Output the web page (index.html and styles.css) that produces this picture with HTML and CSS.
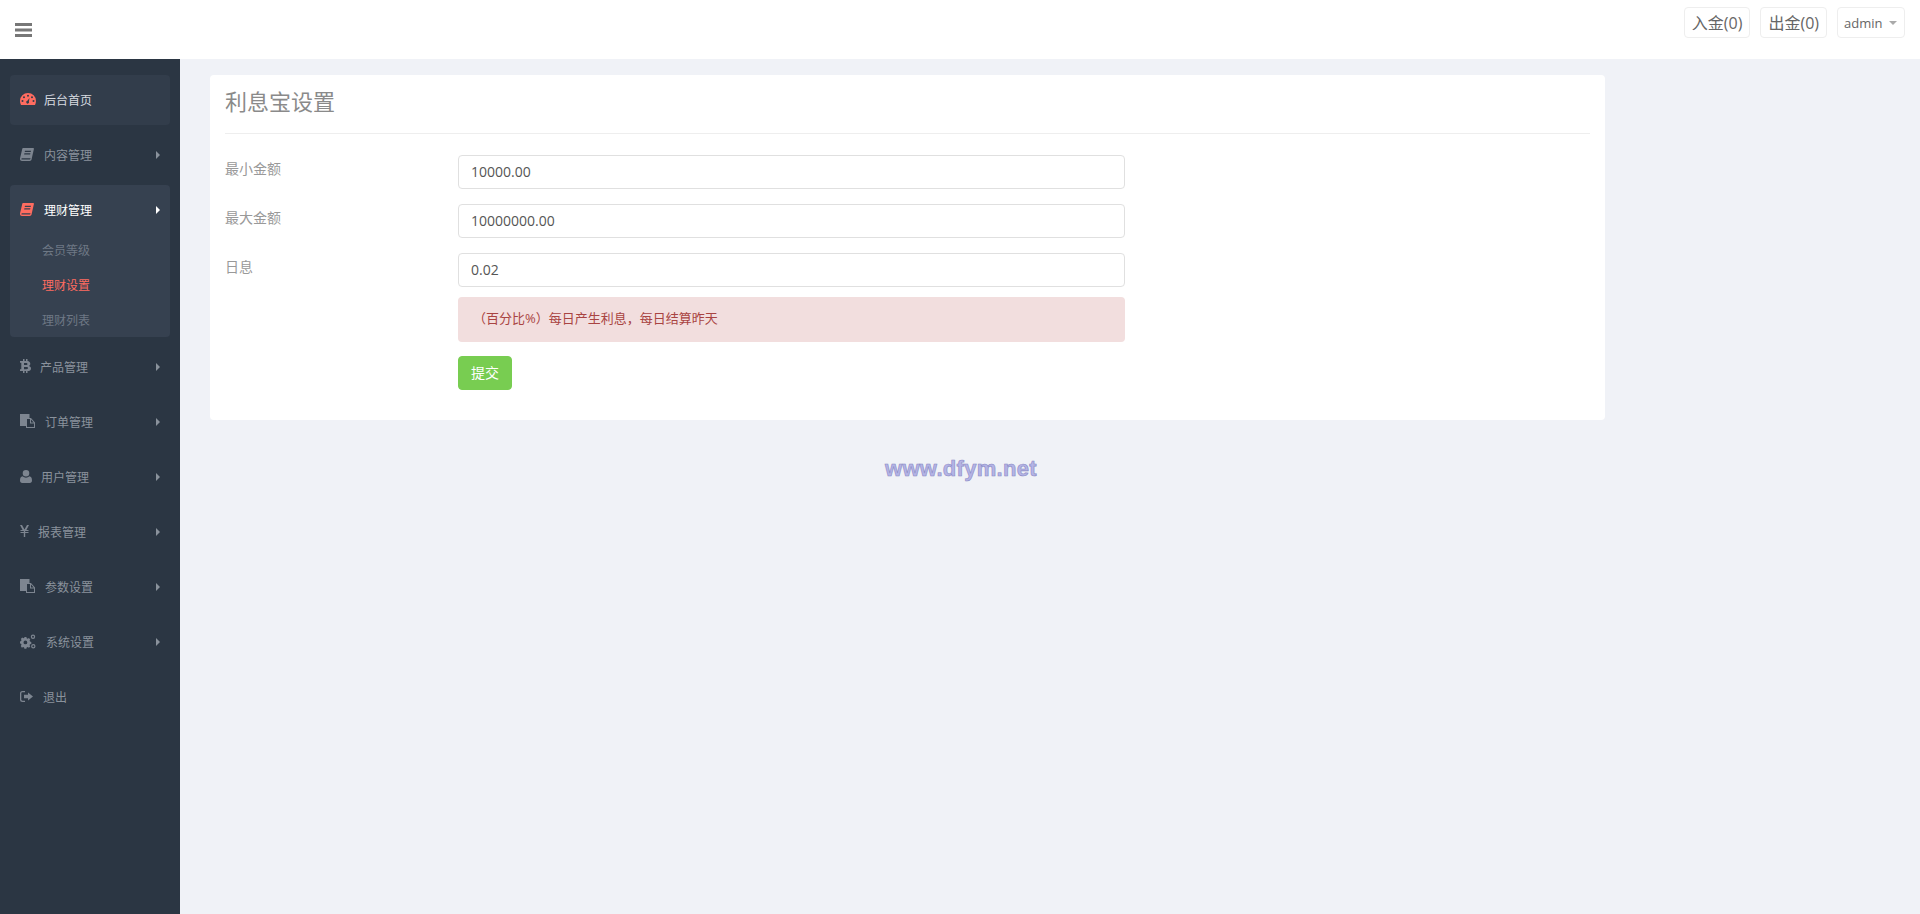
FILE: index.html
```html
<!DOCTYPE html>
<html lang="zh-CN">
<head>
<meta charset="utf-8">
<title>利息宝设置</title>
<link rel="stylesheet" href="styles.css">
</head>
<body>
<header class="topbar">
  <svg class="menu-toggle" viewBox="0 0 17 14"><path d="M0 0h17v3H0zM0 5.500h17v3H0zM0 11h17v3H0z"/></svg>
  <div class="top-actions">
    <a class="top-btn">入金(0)</a>
    <a class="top-btn">出金(0)</a>
    <a class="top-btn user-btn">admin<i class="caret"></i></a>
  </div>
</header>
<div class="shell">
  <aside class="sidebar">
    <nav class="nav">
      <div class="nav-group nav-home">
        <a class="nav-item">
          <svg class="ico ico-dash" viewBox="0 0 16 12"><path fill-rule="evenodd" d="M8 0a8 8 0 0 1 8 8c0 1.500-.4 2.800-1 4H1c-.6-1.200-1-2.500-1-4a8 8 0 0 1 8-8zM8 1.700a1 1 0 1 0 0 2 1 1 0 0 0 0-2zM4 3.200a1 1 0 1 0 0 2 1 1 0 0 0 0-2zM12 3.200a1 1 0 1 0 0 2 1 1 0 0 0 0-2zM2.500 7a1 1 0 1 0 0 2 1 1 0 0 0 0-2zM13.500 7a1 1 0 1 0 0 2 1 1 0 0 0 0-2zM9.500 5 7.400 7.800a1.400 1.400 0 1 0 1.500.8z"/></svg>
          <span>后台首页</span>
        </a>
      </div>
      <div class="nav-group">
        <a class="nav-item">
          <svg class="ico ico-book" viewBox="0 0 14 13"><path fill-rule="evenodd" d="M3 0h10.200c.6 0 .9.400.7 1l-2.300 10.300c-.2.900-.9 1.700-2 1.700H2c-1.200 0-2-1-2-2 0-.3 0-.6.100-.9L2.300.8C2.400.3 2.600 0 3 0zM5 2.700l-.3 1.200h6l.3-1.200zM4.400 5.300l-.3 1.200h6l.3-1.200zM2 10.300c-.4 0-.6.300-.6.600s.2.600.6.600h7.800c.3 0 .5-.2.600-.5l.1-.7z"/></svg>
          <span>内容管理</span><i class="arrow"></i>
        </a>
      </div>
      <div class="nav-group nav-open">
        <a class="nav-item">
          <svg class="ico ico-book" viewBox="0 0 14 13"><path fill-rule="evenodd" d="M3 0h10.200c.6 0 .9.400.7 1l-2.300 10.300c-.2.900-.9 1.700-2 1.700H2c-1.200 0-2-1-2-2 0-.3 0-.6.100-.9L2.300.8C2.400.3 2.600 0 3 0zM5 2.700l-.3 1.200h6l.3-1.200zM4.400 5.300l-.3 1.200h6l.3-1.200zM2 10.300c-.4 0-.6.300-.6.600s.2.600.6.600h7.800c.3 0 .5-.2.600-.5l.1-.7z"/></svg>
          <span>理财管理</span><i class="arrow"></i>
        </a>
        <div class="subnav">
          <a class="sub-item">会员等级</a>
          <a class="sub-item sub-active">理财设置</a>
          <a class="sub-item">理财列表</a>
        </div>
      </div>
      <div class="nav-group">
        <a class="nav-item">
          <svg class="ico ico-btc" viewBox="0 0 11 14"><path fill-rule="evenodd" d="M3 0h1.500v2H6V0h1.500v2.100C9.300 2.400 10.300 3.300 10.300 4.800c0 1-.5 1.700-1.300 2.100 1.200.4 2 1.200 2 2.500 0 1.800-1.300 2.600-3.500 2.700V14H6v-1.900H4.500V14H3v-1.900H0V10.300h1.300V3.700H0V2h3zM4 3.900v2.200h2c.9 0 1.500-.4 1.500-1.100S6.900 3.900 6 3.900zM4 8v2.200h2.400c1 0 1.700-.4 1.700-1.100C8.100 8.400 7.400 8 6.400 8z"/></svg>
          <span>产品管理</span><i class="arrow"></i>
        </a>
      </div>
      <div class="nav-group">
        <a class="nav-item">
          <svg class="ico ico-files" viewBox="0 0 15 14"><path fill-rule="evenodd" d="M0 0h9.500v4H11l4 4.500V14H6v-2H0zM7 5v8h7V9.500h-4V5zM11 5.500v3h2.700z"/></svg>
          <span>订单管理</span><i class="arrow"></i>
        </a>
      </div>
      <div class="nav-group">
        <a class="nav-item">
          <svg class="ico ico-user" viewBox="0 0 12 13"><path d="M6 0a3.300 3.300 0 1 1 0 6.600A3.300 3.300 0 0 1 6 0zM2.600 6.300C3.500 7.200 4.700 7.700 6 7.700s2.500-.5 3.400-1.400c1.800.2 2.600 1.700 2.600 4.200 0 1.500-.8 2.500-2.200 2.500H2.200C.8 13 0 12 0 10.500c0-2.500.8-4 2.600-4.200z"/></svg>
          <span>用户管理</span><i class="arrow"></i>
        </a>
      </div>
      <div class="nav-group">
        <a class="nav-item">
          <svg class="ico ico-yen" viewBox="0 0 9 12"><path d="M0 0h2l2.500 4.500L7 0h2L6.400 5H8.500v1H5.200v1h3.300v1H5.200v4H3.800V8H.5V7h3.300V6H.5V5h2.100z"/></svg>
          <span>报表管理</span><i class="arrow"></i>
        </a>
      </div>
      <div class="nav-group">
        <a class="nav-item">
          <svg class="ico ico-files" viewBox="0 0 15 14"><path fill-rule="evenodd" d="M0 0h9.500v4H11l4 4.500V14H6v-2H0zM7 5v8h7V9.500h-4V5zM11 5.500v3h2.700z"/></svg>
          <span>参数设置</span><i class="arrow"></i>
        </a>
      </div>
      <div class="nav-group">
        <a class="nav-item">
          <svg class="ico ico-cogs" viewBox="0 0 16 14"><path fill-rule="evenodd" d="M4.400 2.500h2l.3 1.300 1 .4 1.200-.7 1.400 1.400-.7 1.200.4 1 1.300.3v2l-1.300.3-.4 1 .7 1.200-1.400 1.400-1.200-.7-1 .4-.3 1.300h-2l-.3-1.300-1-.4-1.200.7L.8 11.400l.7-1.200-.4-1L0 8.900v-2l1.100-.3.4-1-.7-1.200 1.400-1.400 1.200.7 1-.4zM5.400 6a1.900 1.900 0 1 0 0 3.800 1.900 1.900 0 0 0 0-3.800zM13 0a2.200 2.200 0 1 1 0 4.400A2.200 2.200 0 0 1 13 0zm0 1.200a1 1 0 1 0 0 2 1 1 0 0 0 0-2zM13.300 9.500a2.200 2.200 0 1 1 0 4.400 2.200 2.200 0 0 1 0-4.400zm0 1.200a1 1 0 1 0 0 2 1 1 0 0 0 0-2z"/></svg>
          <span>系统设置</span><i class="arrow"></i>
        </a>
      </div>
      <div class="nav-group">
        <a class="nav-item">
          <svg class="ico ico-out" viewBox="0 0 13 11"><path fill-rule="evenodd" d="M2.500 0H5v1.300H2.500c-.7 0-1.200.5-1.200 1.200v6c0 .7.500 1.200 1.200 1.200H5V11H2.500A2.500 2.500 0 0 1 0 8.500v-6A2.500 2.500 0 0 1 2.500 0zM8 1.500l5 4-5 4V7.200H4V3.800h4z"/></svg>
          <span>退出</span>
        </a>
      </div>
    </nav>
  </aside>
  <main class="content">
    <section class="card">
      <h1 class="card-title">利息宝设置</h1>
      <form class="form">
        <label class="form-label">最小金额</label>
        <input class="form-input" type="text" value="10000.00">
        <label class="form-label">最大金额</label>
        <input class="form-input" type="text" value="10000000.00">
        <label class="form-label">日息</label>
        <div class="field-stack">
          <input class="form-input" type="text" value="0.02">
          <div class="alert">（百分比%）每日产生利息，每日结算昨天</div>
          <button class="submit" type="button">提交</button>
        </div>
      </form>
    </section>
    <div class="watermark">www.dfym.net</div>
  </main>
</div>
</body>
</html>
```
FILE: styles.css
```css
* { box-sizing: border-box; }
html, body { height: 100%; }
body {
  margin: 0;
  overflow: hidden;
  background: #f0f2f7;
  color: #555;
  font-family: "Open Sans", "Noto Sans CJK SC", sans-serif;
  font-size: 14px;
}
.topbar {
  height: 59px;
  background: #fff;
  display: flex;
  justify-content: space-between;
  align-items: flex-start;
  padding: 7px 15px 0;
}
.menu-toggle { width: 17px; height: 14px; margin-top: 16px; fill: #777; }
.top-actions { display: flex; gap: 10px; }
.top-btn {
  height: 31px;
  padding: 0 7px;
  border: 1px solid #eee;
  border-radius: 4px;
  background: #fff;
  color: #666;
  font-size: 16px;
  line-height: 31px;
  white-space: nowrap;
}
.user-btn { width: 68px; padding: 1px 6px 0; font-size: 13px; display: flex; align-items: center; }
.caret {
  margin-left: 7px;
  border-left: 4px solid transparent;
  border-right: 4px solid transparent;
  border-top: 4px solid #aaa;
}
.shell { display: flex; height: calc(100% - 59px); }
.sidebar { width: 180px; flex: none; background: #2b3643; padding: 16px 10px 0; }
.nav { display: flex; flex-direction: column; gap: 5px; }
.nav-group { border-radius: 4px; }
.nav-home { background: #323d4b; }
.nav-home .nav-item { color: #d8dce1; }
.nav-home .ico, .nav-open .nav-item .ico { fill: #ff6c60; }
.nav-open { background: #364150; height: 152px; }
.nav-open .nav-item { color: #fff; }
.nav-open .arrow { border-left-color: #fff; }
.nav-item {
  height: 50px;
  display: flex;
  align-items: center;
  padding: 0 10px;
  color: #8a929c;
  font-size: 12px;
  position: relative;
}
.ico { flex: none; fill: #7d8590; margin-bottom: 2px; }
.ico-dash { width: 16px; height: 12px; margin-right: 8px; }
.ico-book { width: 14px; height: 13px; margin-right: 10px; }
.ico-btc { width: 11px; height: 14px; margin-right: 9px; }
.ico-files { width: 15px; height: 14px; margin-right: 10px; }
.ico-user { width: 12px; height: 13px; margin-right: 9px; }
.ico-yen { width: 9px; height: 12px; margin-right: 9px; }
.ico-cogs { width: 16px; height: 15px; margin-right: 10px; }
.ico-out { width: 13px; height: 11px; margin-right: 10px; }
.arrow {
  position: absolute;
  right: 10px;
  top: 21px;
  border-top: 4px solid transparent;
  border-bottom: 4px solid transparent;
  border-left: 4px solid #8a929c;
}
.subnav { display: flex; flex-direction: column; margin-top: -2px; }
.sub-item {
  height: 35px;
  line-height: 35px;
  padding-left: 32px;
  color: #6e7885;
  font-size: 12px;
}
.sub-active { color: #ff6c60; }
.content { flex: 1; padding: 16px 30px; position: relative; }
.card {
  width: 1395px;
  height: 345px;
  background: #fff;
  border-radius: 4px;
  padding: 0 15px;
}
.card-title {
  margin: 0 0 21px;
  height: 59px;
  border-bottom: 1px solid #eee;
  color: #8a8a8a;
  font-size: 22px;
  font-weight: 400;
  line-height: 53px;
}
.form { display: grid; grid-template-columns: 233px 667px; row-gap: 15px; align-items: start; }
.form-label { padding-top: 4px; line-height: 20px; color: #999; font-size: 14px; }
.form-input {
  display: block;
  width: 100%;
  height: 34px;
  padding: 0 12px 2px;
  border: 1px solid #e0e0e0;
  border-radius: 4px;
  background: #fff;
  color: #555;
  font: 14px "Open Sans", "Noto Sans CJK SC", sans-serif;
}
.field-stack { display: flex; flex-direction: column; align-items: flex-start; }
.alert {
  width: 100%;
  height: 45px;
  margin: 10px 0 14px;
  padding: 0 15px;
  border-radius: 4px;
  background: #f2dede;
  color: #a94442;
  font-size: 13px;
  line-height: 43px;
}
.submit {
  width: 54px;
  height: 34px;
  padding: 0 0 3px;
  border: 1px solid #78cd51;
  border-radius: 4px;
  background: #78cd51;
  color: #fff;
  font: 14px "Open Sans", "Noto Sans CJK SC", sans-serif;
}
.watermark {
  position: absolute;
  left: 705px;
  top: 396px;
  color: #b4b4e6;
  font: bold 22px/28px "Liberation Sans", sans-serif;
  letter-spacing: .3px;
  -webkit-text-stroke: .6px #8a8ac4;
}
```
